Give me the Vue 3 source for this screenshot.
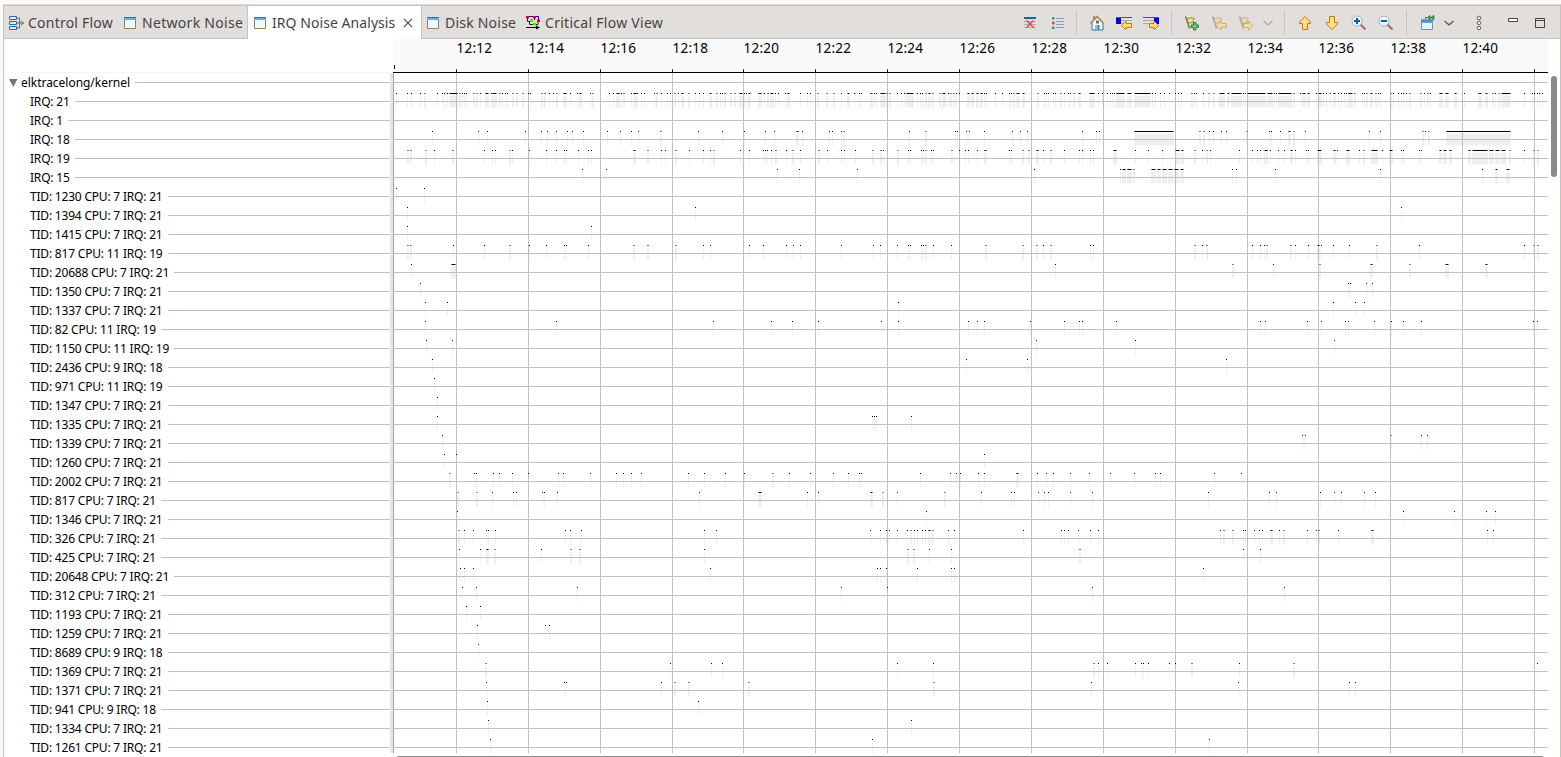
<script setup>
// Each event is "x" or "x:width" in timeline pixels.
const source = [
  ['IRQ: 21', '396 407 411 420 424:2 437 442 444 447 449:9 459:2 462 464 466 473:2 476:2 480 485:4 491 492:5 499:2 502 505 507 512:2 516:2 522:2 528 530 541:2 544:2 549 553 556:2 563:4 570 577 579:3 590 592:2 609 613 616:4 621 623:2 631 633:4 637 641 644 654 656:2 661 667 670 674:2 678 681:3 688:2 695 699 703 709:3 716:2 720 722 724:2 730:2 734:2 739:4 744 746 748:3 758:4 764 767:2 770:4 775 778 785 787:3 800 807 810 817:2 826:2 833:2 841 847:3 854 859 861 870:3 874 876 880:6 886:2 889:2 897 901 904 906:8 917 920 922 925:2 928:3 932:2 939:2 942:4 948 950:2 953:2 956 959 967:3 971:3 976:3 980:3 984 986 995 1002 1009 1011 1013:2 1016:4 1022:3 1037:2 1044 1046 1048 1053 1055 1060:2 1064 1068 1070 1073:2 1078:3 1089:6 1098 1102 1107 1110 1112 1114 1116:9 1127:5 1134:17 1152 1155 1160 1164 1169 1175 1178 1181 1191:2 1194 1196 1203 1208:2 1213:2 1219:6 1227:3 1231:11 1243 1245 1247:19 1267:6 1274 1276 1278:14 1293:2 1300 1302:4 1307:3 1316 1318:4 1323 1326 1330 1333:3 1338 1341 1344 1346 1348:5 1354:2 1362 1364 1366:2 1370:3 1375:2 1378 1380 1390:2 1393 1398 1401 1403 1406 1409:2 1420:2 1424 1427:2 1430 1439:4 1445:4 1454:3 1464 1478:4 1485:3 1492:2 1495 1498:2 1501:10 1524 1532 1534 1537 1539 1542'],
  ['IRQ: 1', ''],
  ['IRQ: 18', '432 478 487 525 541 547 556 567 572 583 607 620 631 638 660:2 698 722 744 765 774 796:3 802 829 832 841 843:2 909 925:2 955 957 966 969 984 1012 1020 1027 1082 1096 1099 1134:40 1199:2 1203:2 1209 1213 1221 1226 1246:2 1269 1271 1280 1288:3 1293:2 1305 1369 1380 1422:2 1425 1428:2 1446:65'],
  ['IRQ: 19', '407:2 410:2 425:2 434 452:2 484 492 495 509:2 512 529 546 556 564 566 578 588 591 633:3 647:2 661 665 675:2 689 703 710 713:2 740 749 763 765 767 771 775:2 786 792:2 800 818:2 827 841 844 855 872:2 880:2 883 897:2 908 910 921 923 925:2 931 933 951:2 959 965 968 977 984:3 1009 1011 1022:2 1028:2 1036:3 1043 1050:2 1064 1079 1082 1090 1093 1113:4 1135 1148 1162 1175:5 1181:3 1194:2 1202 1206:2 1210 1239 1252 1257 1260 1264:4 1270 1278 1284 1290:3 1295 1306 1308 1317:5 1333:3 1337 1346:4 1359 1363:2 1371:7 1382 1389:4 1401 1403 1419 1421 1439:3 1443:4 1449:3 1468:3 1472:16 1489:5 1495:5 1501:5 1509:2 1524 1533:2 1537:2'],
  ['IRQ: 15', '582 606 777 799 857 1034 1120 1122:4 1127:5 1133:2 1151:5 1157:4 1162:5 1168:5 1174:5 1180:4 1232 1236 1275 1380 1482 1495:3 1506:4'],
  ['TID: 1230 CPU: 7 IRQ: 21', '396 424'],
  ['TID: 1394 CPU: 7 IRQ: 21', '407 695 1401'],
  ['TID: 1415 CPU: 7 IRQ: 21', '407 591'],
  ['TID: 817 CPU: 11 IRQ: 19', '407:2 410:2 453 484 509:2 529 546 564 566 588 633:2 647:2 675:2 703 710 749 763 786 793 800 841 873 880 897 908 910 921 923 925:2 933 951 985:2 1022:2 1036:2 1043 1050:2 1090 1093 1194:2 1202 1206:2 1252 1260 1264 1266:2 1290:2 1295 1308 1317:3 1321 1333 1349 1376:2 1419 1524 1533:2 1537:2'],
  ['TID: 20688 CPU: 7 IRQ: 21', '411 451:5 1055 1232:2 1273 1319:2 1370:3 1409:2 1445:4 1485:3'],
  ['TID: 1350 CPU: 7 IRQ: 21', '420 1348 1350 1366 1372'],
  ['TID: 1337 CPU: 7 IRQ: 21', '425 447 898 1333 1355 1364'],
  ['TID: 82 CPU: 11 IRQ: 19', '425 556 713 771 792 818 881 898 968 977 984 1030 1064 1079 1082 1116 1260 1265 1307 1321 1345 1348 1374 1391 1403 1421 1533 1537'],
  ['TID: 1150 CPU: 11 IRQ: 19', '426 452 1036 1135 1334'],
  ['TID: 2436 CPU: 9 IRQ: 18', '432 966 1027 1226'],
  ['TID: 971 CPU: 11 IRQ: 19', '434'],
  ['TID: 1347 CPU: 7 IRQ: 21', '437'],
  ['TID: 1335 CPU: 7 IRQ: 21', '437 872 874 876 911'],
  ['TID: 1339 CPU: 7 IRQ: 21', '442 1302 1305 1390:2 1421 1427'],
  ['TID: 1260 CPU: 7 IRQ: 21', '444 456 984'],
  ['TID: 2002 CPU: 7 IRQ: 21', '449:2 474 476 493 499 512 528 558 563 590 616 623 631 641 688 704 725 744 772:2 789 810 833 848 859 861 920 950 956 960 978 984 1016:3 1037 1046 1053 1070 1089 1110 1134 1155 1160 1214 1241'],
  ['TID: 817 CPU: 7 IRQ: 21', '457:2 476:2 492 513 516 542 544 557 699 758:4 807 818 870:3 882:2 897 944:2 981 1011 1014 1038 1044 1048 1070 1092 1208 1269 1276 1320 1334 1341 1364 1375'],
  ['TID: 1346 CPU: 7 IRQ: 21', '457 926 1403 1454 1486 1495'],
  ['TID: 326 CPU: 7 IRQ: 21', '458:2 464 473 486 488 495 565 570 581 704 716 870 880 886 889 897 907 910:2 914 917 922 925 928:3 932:2 948 954 1023 1061 1064 1068 1078 1090 1098 1220 1223:2 1232:2 1243 1245 1254 1259 1262 1270:3 1279 1283:2 1307 1316 1318:2 1338 1371:3 1487 1493'],
  ['TID: 425 CPU: 7 IRQ: 21', '459 480 486:3 494:2 541 570:2 579:2 704 907:2 913:2 929 951 1079:2 1243 1260'],
  ['TID: 20648 CPU: 7 IRQ: 21', '460 464 473 710 877 880 886 917 951 954 1203'],
  ['TID: 312 CPU: 7 IRQ: 21', '462 476 577 841 887 1092 1284'],
  ['TID: 1193 CPU: 7 IRQ: 21', '466 480'],
  ['TID: 1259 CPU: 7 IRQ: 21', '477 545 549'],
  ['TID: 8689 CPU: 9 IRQ: 18', '478'],
  ['TID: 1369 CPU: 7 IRQ: 21', '485:2 670 711 722 897 933 1093:2 1098 1107 1135 1141 1143 1148 1169 1175 1191:2 1239 1293:2 1537'],
  ['TID: 1371 CPU: 7 IRQ: 21', '486 564 566 661 674:2 688:2 748:2 933:2 1091 1238 1349 1355'],
  ['TID: 941 CPU: 9 IRQ: 18', '487 698'],
  ['TID: 1334 CPU: 7 IRQ: 21', '488 911'],
  ['TID: 1261 CPU: 7 IRQ: 21', '490 872 1209'],
]

const rows = source.map(([label, raw], i) => {
  const y = 9 + 19 * (i + 1)
  let strips = ''
  let fades = ''
  let black = ''
  let gray = ''
  for (const item of raw.split(' ').filter(Boolean)) {
    const [x, w = 1] = item.split(':').map(Number)
    strips += `M${x} ${y - 5}h${w}v11h${-w}z`
    fades += `M${x} ${y - 6}h${w}v13h${-w}z`
    if (w === 2) gray += `M${x} ${y - 8}h2v1h-2z`
    else if (w > 2) {
      gray += `M${x} ${y - 8}h${w}v1h${-w}z`
      black += `M${x + 1} ${y - 8}h${w - 2}v1h${2 - w}z`
    } else black += `M${x} ${y - 8}h1v1h-1z`
  }
  return { label, y, strips, fades, black, gray }
})

const gridX = [456, 528, 600, 672, 743, 815, 887, 959, 1031, 1103, 1175, 1247, 1318, 1390, 1462, 1534]
const times = gridX.slice(0, 15).map((x, i) => ({ x, text: `12:${12 + i * 2}` }))
</script>

<template>
  <div class="window">
    <header class="bar">
      <div class="tab t1">
        <svg class="ic" width="16" height="16" viewBox="0 0 16 16" fill="none">
          <path d="M.5 1.500h7v3h-7zM.5 6.500h7v3h-7zM.5 11.500h7v3h-7z" fill="#d8e8f6" stroke="#2b6dab" />
          <path d="M8 3h2.500v10H8M8 8h6.500M12 5.800 14.500 8 12 10.200" stroke="#666" />
        </svg>
        <span class="name n1">Control Flow</span>
      </div>
      <div class="tab t2">
        <svg class="ic" width="16" height="16" viewBox="0 0 16 16"><use href="#viewIcon" /></svg>
        <span class="name n2">Network Noise</span>
      </div>
      <div class="tab t3 active">
        <svg class="ic" width="16" height="16" viewBox="0 0 16 16"><use href="#viewIcon" /></svg>
        <span class="name n3">IRQ Noise Analysis</span>
        <svg class="close" width="10" height="10" viewBox="0 0 10 10"><path d="M.8.8 9.200 9.200M9.200.8.8 9.200" stroke="#444" stroke-width="1.100" /></svg>
      </div>
      <div class="tab t4">
        <svg class="ic" width="16" height="16" viewBox="0 0 16 16"><use href="#viewIcon" /></svg>
        <span class="name n4">Disk Noise</span>
      </div>
      <div class="tab t5">
        <svg class="ic" width="16" height="16" viewBox="0 0 16 16" fill="none">
          <path d="M2.500 3V6.500H6.500V4" stroke="#222" />
          <path d="M4 1.500h9.500V5" stroke="#00e" />
          <path d="M9.500 3v2M4.500 7v2.500H13V7" stroke="#222" />
          <path d="M1 12.500H12" stroke="#000" />
          <path d="M11 10.500v4l4-2z" fill="#000" />
          <path d="M1 1h3v2.500H1zM8 1h3v2.500H8zM12 4.500h3V7h-3z" fill="#f00" />
          <path d="M5 4.500h3V7H5zM8 8h3v2.500H8z" fill="#3f0" />
        </svg>
        <span class="name n5">Critical Flow View</span>
      </div>

      <div class="tools">
        <div class="group g1">
          <svg width="16" height="16" viewBox="0 0 16 16" fill="none">
            <path d="M2 3h12" stroke="#1563a5" stroke-width="2" />
            <path d="M2 6.500h12M2 9.500h12M2 12.500h12" stroke="#a5adb5" />
            <path d="M4.500 5.500l7 7M11.500 5.500l-7 7" stroke="#e34046" stroke-width="1.400" />
          </svg>
          <svg width="16" height="16" viewBox="0 0 16 16" fill="none">
            <path d="M6 3.500h8M6 6.500h8M6 9.500h8M6 12.500h8" stroke="#7d9fc9" />
            <path d="M2 2h2.500v2.500H2z" fill="#4787c2" /><circle cx="3.300" cy="8" r="1.500" fill="#d94740" /><path d="M2 11.500h2.500V14H2z" fill="#3c9d5e" />
          </svg>
        </div>
        <i class="sep" />
        <div class="group g2">
          <svg width="16" height="16" viewBox="0 0 16 16">
            <path d="M3 7v8h11V7L8.500 2z" fill="#f7fbff" stroke="#35739e" />
            <path d="M4 1h2v4H4z" fill="#c77a43" />
            <path d="M1.500 8.500 8 1.500l6.500 7" fill="none" stroke="#b78b56" stroke-width="1.600" />
            <path d="M7 5.500h3v3H7z" fill="#408355" /><path d="M6.500 10h4v5h-4z" fill="#357fb6" />
            <path d="M8 10v5" stroke="#e5f0fa" />
          </svg>
          <svg width="16" height="16" viewBox="0 0 16 16">
            <path d="M0 2.500h16" stroke="#555" /><path d="M5 5.500h11M5 8.500h11" stroke="#aaa" /><path d="M0 3h5v6H0z" fill="#00f" />
            <path d="M5.500 10.500 10 6v2.500h5.500v4H10V15z" fill="#ffdc72" stroke="#b9811c" />
          </svg>
          <svg width="16" height="16" viewBox="0 0 16 16">
            <path d="M0 2.500h16" stroke="#555" /><path d="M0 5.500h11M0 8.500h11" stroke="#aaa" /><path d="M11 3h5v6h-5z" fill="#00f" />
            <path d="M15.500 10.500 11 6v2.500H6.500v4H11V15z" fill="#ffdc72" stroke="#b9811c" />
          </svg>
        </div>
        <i class="sep" />
        <div class="group g3">
          <svg width="16" height="16" viewBox="0 0 16 16">
            <use href="#flag" />
            <path d="M9.500 7.500h2.500v2.500h2.500V12.500H12V15H9.500v-2.500H7V10h2.500z" fill="#7bc67c" stroke="#278445" />
          </svg>
          <svg class="off" width="16" height="16" viewBox="0 0 16 16">
            <use href="#flag" /><path d="M5.500 10.500 10 6v2.500h5.500v4H10V15z" fill="#ffdc72" stroke="#b9811c" />
          </svg>
          <svg class="off" width="16" height="16" viewBox="0 0 16 16">
            <use href="#flag" /><path d="M15 10.500 10.500 6v2.500H5.500v4h5V15z" fill="#ffdc72" stroke="#b9811c" />
          </svg>
          <svg class="chev" width="10" height="16" viewBox="0 0 10 16"><path d="M.5 6 5 10 9.500 6" fill="none" stroke="#aaa" stroke-width="1.300" /></svg>
        </div>
        <i class="sep" />
        <div class="group g4">
          <svg width="16" height="16" viewBox="0 0 16 16"><path d="M8 1.500 13.500 7v1.500h-3v6h-5v-6h-3V7z" fill="#ffe07a" stroke="#b9791b" /></svg>
          <svg width="16" height="16" viewBox="0 0 16 16"><path d="M8 14.500 2.500 9V7.500h3v-6h5v6h3V9z" fill="#ffe07a" stroke="#b9791b" /></svg>
          <svg width="16" height="16" viewBox="0 0 16 16">
            <path d="m9.500 9.500 5 5" stroke="#927066" stroke-width="2" /><circle cx="6" cy="6" r="5" fill="#eff8ff" stroke="#9ab5cf" />
            <path d="M6 3v6M3 6h6" stroke="#075da1" stroke-width="2" />
          </svg>
          <svg width="16" height="16" viewBox="0 0 16 16">
            <path d="m9.500 9.500 5 5" stroke="#927066" stroke-width="2" /><circle cx="6" cy="6" r="5" fill="#eff8ff" stroke="#9ab5cf" />
            <path d="M3 6h6" stroke="#075da1" stroke-width="2" />
          </svg>
        </div>
        <i class="sep" />
        <div class="group g5">
          <svg width="16" height="16" viewBox="0 0 16 16">
            <path d="M1.500 5.500h11v9h-11z" fill="#e4f4ff" stroke="#6f91a5" /><path d="M1 5h12v3H1z" fill="#5f9dcf" /><path d="M1 4.500h12v1H1z" fill="#2f6fa5" />
            <path d="M5.500 4V2.500H9" fill="none" stroke="#555" /><path d="M7.500 2.500 10 .3V2h1.500L14 .3v4.400L11.500 3H10v1.700z" fill="#4f9a4e" stroke="#216d2b" stroke-width=".6" />
          </svg>
          <svg class="chev2" width="10" height="16" viewBox="0 0 10 16"><path d="M.5 6 5 10 9.500 6" fill="none" stroke="#555" stroke-width="1.300" /></svg>
          <svg class="dots" width="6" height="16" viewBox="0 0 6 16" fill="#eee" stroke="#666">
            <circle cx="3" cy="3" r="1.800" /><circle cx="3" cy="8" r="1.800" /><circle cx="3" cy="13" r="1.800" />
          </svg>
          <svg class="min" width="10" height="16" viewBox="0 0 10 16"><path d="M.5 3.500h9v3h-9z" fill="#fff" stroke="#444" /></svg>
          <svg class="max" width="10" height="16" viewBox="0 0 10 16"><path d="M.5 3.500h9v9h-9zM0 5.500h10" fill="none" stroke="#444" /></svg>
        </div>
      </div>
    </header>

    <main class="body">
      <section class="tree">
        <div class="treeHead" />
        <div class="row root">
          <svg width="9" height="8" viewBox="0 0 9 8"><path d="M0 0h8.500L4.250 8z" fill="#777" /></svg>
          <span class="label rootLabel">elktracelong/kernel</span><i />
        </div>
        <div v-for="r in rows" :key="r.label" class="row">
          <span class="label">{{ r.label }}</span><i />
        </div>
      </section>
      <div class="sash" />
      <section class="chart">
        <svg class="axis" width="1155" height="34" viewBox="393 39 1155 34">
          <path d="M393 72.500h1155" stroke="#000" />
          <path d="M394.500 65v4" stroke="#000" />
          <g v-for="x in gridX" :key="x">
            <path :d="`M${x + 0.5} 69v1`" stroke="#777" /><path :d="`M${x + 0.5} 70v2`" stroke="#000" />
          </g>
          <text v-for="t in times" :key="t.x" :x="t.x + 0.5" y="53" textLength="35.500">{{ t.text }}</text>
        </svg>
        <svg class="plot" width="1155" height="680" viewBox="393 0 1155 680" shape-rendering="crispEdges">
          <path v-for="r in rows" :key="r.y" :d="r.fades" fill="#f8f8f8" />
          <path v-for="r in rows" :key="r.y" :d="r.strips" fill="#efefef" />
          <path v-for="x in gridX" :key="x" :d="`M${x} 0h1v680h-1z`" fill="#c0c0c0" />
          <path d="M393 9h1155v1H393z" fill="#c0c0c0" />
          <g v-for="r in rows" :key="r.y">
            <path :d="`M393 ${r.y}h1155v1H393z`" fill="#c0c0c0" />
            <path :d="r.gray" fill="#808080" />
            <path :d="r.black" fill="#000" />
          </g>
          <path d="M393 0h1v680h-1z" fill="#9c9cea" />
        </svg>
        <div class="hscroll" />
      </section>
      <div class="vscroll"><div class="thumb" /></div>
    </main>

    <svg class="defs" width="0" height="0">
      <defs>
        <linearGradient id="frame" x1="0" y1="0" x2="0" y2="1"><stop offset="0" stop-color="#4d7fae" /><stop offset="1" stop-color="#9a8453" /></linearGradient>
        <symbol id="viewIcon" viewBox="0 0 16 16">
          <path d="M2.500 2.500h11v11h-11z" fill="#f1f9ff" stroke="url(#frame)" />
          <path d="M2 2h12v3H2z" fill="#70a9d5" /><path d="M2 2h12v1H2z" fill="#376f9f" />
        </symbol>
        <symbol id="flag" viewBox="0 0 16 16">
          <path d="M1.500 1.500 5.500 13.500" stroke="#7b6640" stroke-width="1.300" />
          <path d="M2.500 2.500 5 3.500l2-1 3.500 1-1.500 2 1 2.500-3-.5-2.500 1z" fill="#f2df7c" stroke="#8c7332" stroke-width=".8" />
        </symbol>
      </defs>
    </svg>
  </div>
</template>

<style>
body { overflow: hidden; background: #fafafa; }
</style>

<style scoped>
.window { box-sizing: border-box; width: 1561px; height: 757px; padding: 4px 0 0 3px; background: #fafafa; font-family: "Noto Sans", sans-serif; overflow: hidden; }
.bar { box-sizing: border-box; height: 35px; display: flex; align-items: stretch; background: #e1dedb; border-top: 1px solid #dedbd8; border-bottom: 1px solid #c9c2bc; border-left: 1px solid #c9c2bc; border-right: 1px solid #c9c2bc; box-shadow: inset 0 1px #c9c2bc; }
.tab { display: flex; align-items: center; box-sizing: border-box; flex: none; padding-top: 2px; }
.t1 { width: 118px; padding-left: 5px; }
.t2 { width: 125px; }
.t3 { width: 175px; padding-left: 4px; }
.t4 { width: 99px; padding-left: 3px; }
.t5 { width: 143px; padding-left: 4px; }
.active { background: #fff; height: 34px; border-left: 1px solid #c9c2bc; border-right: 1px solid #c9c2bc; border-top: 1px solid #c9c2bc; padding-top: 0; margin-bottom: -1px; }
.ic { flex: none; margin-right: 4px; }
.name { font-size: 14px; line-height: 20px; color: #444; white-space: nowrap; }
.n1 { letter-spacing: .22px; margin-left: -1px; }
.n2 { letter-spacing: .3px; }
.n3 { letter-spacing: .06px; }
.n4 { letter-spacing: .22px; }
.n5 { letter-spacing: .28px; }
.close { margin-left: 8px; }
.tools { margin-left: auto; display: flex; align-items: center; height: 33px; padding-top: 1px; }
.group { display: flex; align-items: center; }
.g1 { gap: 12px; margin-right: 10px; }
.g2 { gap: 11px; margin: 0 12px; }
.g3 { gap: 11px; margin: 0 11px 0 12px; }
.g4 { gap: 11px; margin: 0 12px; }
.g5 { margin: 0 15px 0 13px; }
.chev { margin-left: -2px; }
.chev2 { margin-left: 8px; }
.dots { margin-left: 22px; }
.min { margin-left: 26px; }
.max { margin-left: 17px; }
.off { opacity: .5; }
.sep { width: 1px; height: 26px; background: #c9c4bf; }
.body { display: flex; height: 718px; border-left: 1px solid #c9c2bc; border-right: 1px solid #c9c2bc; background: #fff; }
.tree { width: 386px; }
.treeHead { box-sizing: border-box; height: 34px; border-bottom: 1px solid #f6f6f6; }
.row { display: flex; align-items: center; height: 19px; padding-left: 26px; }
.root { padding-left: 5px; }
.root svg { flex: none; margin-right: 3px; }
.label { font-size: 12px; line-height: 19px; letter-spacing: -.2px; color: #000; white-space: nowrap; }
.rootLabel { letter-spacing: -.03px; }
.row i { flex: 1; height: 1px; background: #c0c0c0; margin-left: 5px; }
.sash { width: 3px; height: 680px; margin-top: 34px; background: #e4e4e4; }
.chart { width: 1155px; }
.axis, .plot { display: block; }
.axis { background: #fafafa; }
.axis text { font-size: 13.500px; fill: #000; }
.hscroll { width: 1146px; height: 4px; margin: 3px 0 0 4px; border-radius: 1px 1px 0 0; background: #8a8a8a; }
.vscroll { width: 11px; padding-top: 37px; }
.thumb { width: 6px; height: 101px; margin-left: 3px; border-radius: 3px; background: #8a8a8a; }
.defs { display: block; }
</style>
